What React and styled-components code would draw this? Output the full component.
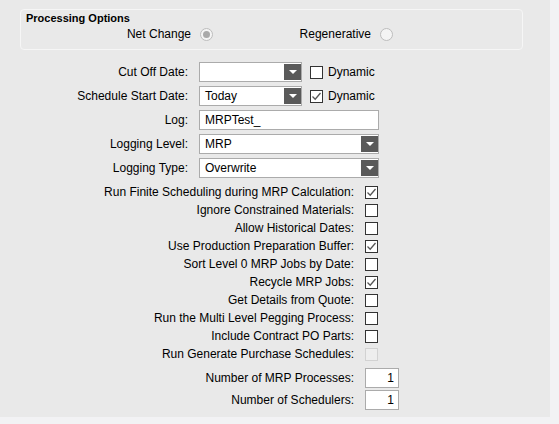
import React from "react";
import styled, { createGlobalStyle } from "styled-components";

const GlobalStyle = createGlobalStyle`
  body {
    margin: 0;
    background: #f2f2f4;
    font-family: "Liberation Sans", Arial, sans-serif;
    font-size: 12px;
    color: #000;
  }
`;

const Panel = styled.div`
  width: 550px;
  height: 417px;
  background: #e9e9e9;
  box-sizing: border-box;
  padding-top: 9px;
`;

const GroupBox = styled.fieldset`
  margin: 0 0 0 20px;
  padding: 2px 0 0 0;
  width: 503px;
  height: 41px;
  box-sizing: border-box;
  border: 1px solid #f6f6f6;
  border-radius: 4px;
`;

const GroupTitle = styled.div`
  font-size: 11px;
  font-weight: bold;
  padding-left: 5px;
  line-height: 13px;
`;

const RadioRow = styled.div`
  display: flex;
  align-items: center;
  height: 16px;
  margin-top: 1px;
`;

const RadioOption = styled.label`
  display: flex;
  align-items: center;
  margin-left: ${({ $offset }) => $offset}px;
`;

const RadioText = styled.span`
  width: ${({ $width }) => $width}px;
  text-align: right;
  margin-right: 9px;
`;

const Radio = styled.span`
  width: 13px;
  height: 13px;
  box-sizing: border-box;
  border-radius: 50%;
  border: 1px solid #bdbdbd;
  background: #f4f4f4;
  display: flex;
  align-items: center;
  justify-content: center;
  &::after {
    content: "";
    width: 7px;
    height: 7px;
    border-radius: 50%;
    background: ${({ $checked }) => ($checked ? "#a9a9a9" : "transparent")};
  }
`;

const Form = styled.div`
  display: flex;
  flex-direction: column;
  gap: 4px;
  margin-top: 12px;
`;

const Row = styled.div`
  display: flex;
  align-items: center;
  height: ${({ $height }) => $height || 20}px;
`;

const Label = styled.span`
  width: ${({ $width }) => $width}px;
  text-align: right;
  margin-right: 11px;
  white-space: nowrap;
`;

const TextBox = styled.div`
  width: ${({ $width }) => $width}px;
  height: 20px;
  box-sizing: border-box;
  background: #fff;
  border: 1px solid #ababab;
  display: flex;
  align-items: center;
  justify-content: ${({ $right }) => ($right ? "flex-end" : "flex-start")};
  padding: ${({ $right }) => ($right ? "0 4px 0 0" : "0 5px")};
`;

const Combo = styled.div`
  width: ${({ $width }) => $width}px;
  height: 20px;
  box-sizing: border-box;
  background: #fff;
  border: 1px solid #ababab;
  display: flex;
  align-items: center;
  padding-left: 5px;
`;

const ComboValue = styled.span`
  flex: 1;
`;

const DropButton = styled.span`
  width: 17px;
  height: 16px;
  background: #5a5a5a;
  display: flex;
  align-items: center;
  justify-content: center;
  &::after {
    content: "";
    border-left: 4px solid transparent;
    border-right: 4px solid transparent;
    border-top: 4px solid #fff;
  }
`;

const Check = styled.span`
  width: 13px;
  height: 13px;
  box-sizing: border-box;
  border: 1px solid ${({ $disabled }) => ($disabled ? "#d2d2d2" : "#333")};
  background: ${({ $disabled }) => ($disabled ? "#eeeeee" : "#fff")};
  display: flex;
  align-items: center;
  justify-content: center;
  margin-left: ${({ $gap }) => $gap || 0}px;
`;

const CheckText = styled.span`
  margin-left: 5px;
`;

const CheckList = styled.div`
  display: flex;
  flex-direction: column;
  margin-top: 5px;
`;

const NumberList = styled.div`
  display: flex;
  flex-direction: column;
  gap: 2px;
  margin-top: 5px;
`;

const Tick = () => (
  <svg width="11" height="11" viewBox="0 0 11 11">
    <path d="M1.5 5.5 L4.2 8.2 L9.5 2" fill="none" stroke="#555" strokeWidth="1.3" />
  </svg>
);

const CheckBox = ({ checked, disabled, gap }) => (
  <Check $disabled={disabled} $gap={gap}>
    {checked && <Tick />}
  </Check>
);

const checkRows = [
  ["Run Finite Scheduling during MRP Calculation:", true],
  ["Ignore Constrained Materials:", false],
  ["Allow Historical Dates:", false],
  ["Use Production Preparation Buffer:", true],
  ["Sort Level 0 MRP Jobs by Date:", false],
  ["Recycle MRP Jobs:", true],
  ["Get Details from Quote:", false],
  ["Run the Multi Level Pegging Process:", false],
  ["Include Contract PO Parts:", false],
  ["Run Generate Purchase Schedules:", false, true],
];

const App = () => (
  <>
    <GlobalStyle />
    <Panel>
      <GroupBox>
        <GroupTitle>Processing Options</GroupTitle>
        <RadioRow>
          <RadioOption $offset={0}>
            <RadioText $width={170}>Net Change</RadioText>
            <Radio $checked />
          </RadioOption>
          <RadioOption $offset={86}>
            <RadioText $width={72}>Regenerative</RadioText>
            <Radio />
          </RadioOption>
        </RadioRow>
      </GroupBox>

      <Form>
        <Row>
          <Label $width={188}>Cut Off Date:</Label>
          <Combo $width={103}>
            <ComboValue />
            <DropButton />
          </Combo>
          <CheckBox gap={8} />
          <CheckText>Dynamic</CheckText>
        </Row>
        <Row>
          <Label $width={188}>Schedule Start Date:</Label>
          <Combo $width={103}>
            <ComboValue>Today</ComboValue>
            <DropButton />
          </Combo>
          <CheckBox gap={8} checked />
          <CheckText>Dynamic</CheckText>
        </Row>
        <Row>
          <Label $width={188}>Log:</Label>
          <TextBox $width={180}>MRPTest_</TextBox>
        </Row>
        <Row>
          <Label $width={188}>Logging Level:</Label>
          <Combo $width={180}>
            <ComboValue>MRP</ComboValue>
            <DropButton />
          </Combo>
        </Row>
        <Row>
          <Label $width={188}>Logging Type:</Label>
          <Combo $width={180}>
            <ComboValue>Overwrite</ComboValue>
            <DropButton />
          </Combo>
        </Row>
      </Form>

      <CheckList>
        {checkRows.map(([text, checked, disabled]) => (
          <Row key={text} $height={18}>
            <Label $width={354}>{text}</Label>
            <CheckBox checked={checked} disabled={disabled} />
          </Row>
        ))}
      </CheckList>

      <NumberList>
        <Row>
          <Label $width={354}>Number of MRP Processes:</Label>
          <TextBox $width={34} $right>1</TextBox>
        </Row>
        <Row>
          <Label $width={354}>Number of Schedulers:</Label>
          <TextBox $width={34} $right>1</TextBox>
        </Row>
      </NumberList>
    </Panel>
  </>
);

export default App;
